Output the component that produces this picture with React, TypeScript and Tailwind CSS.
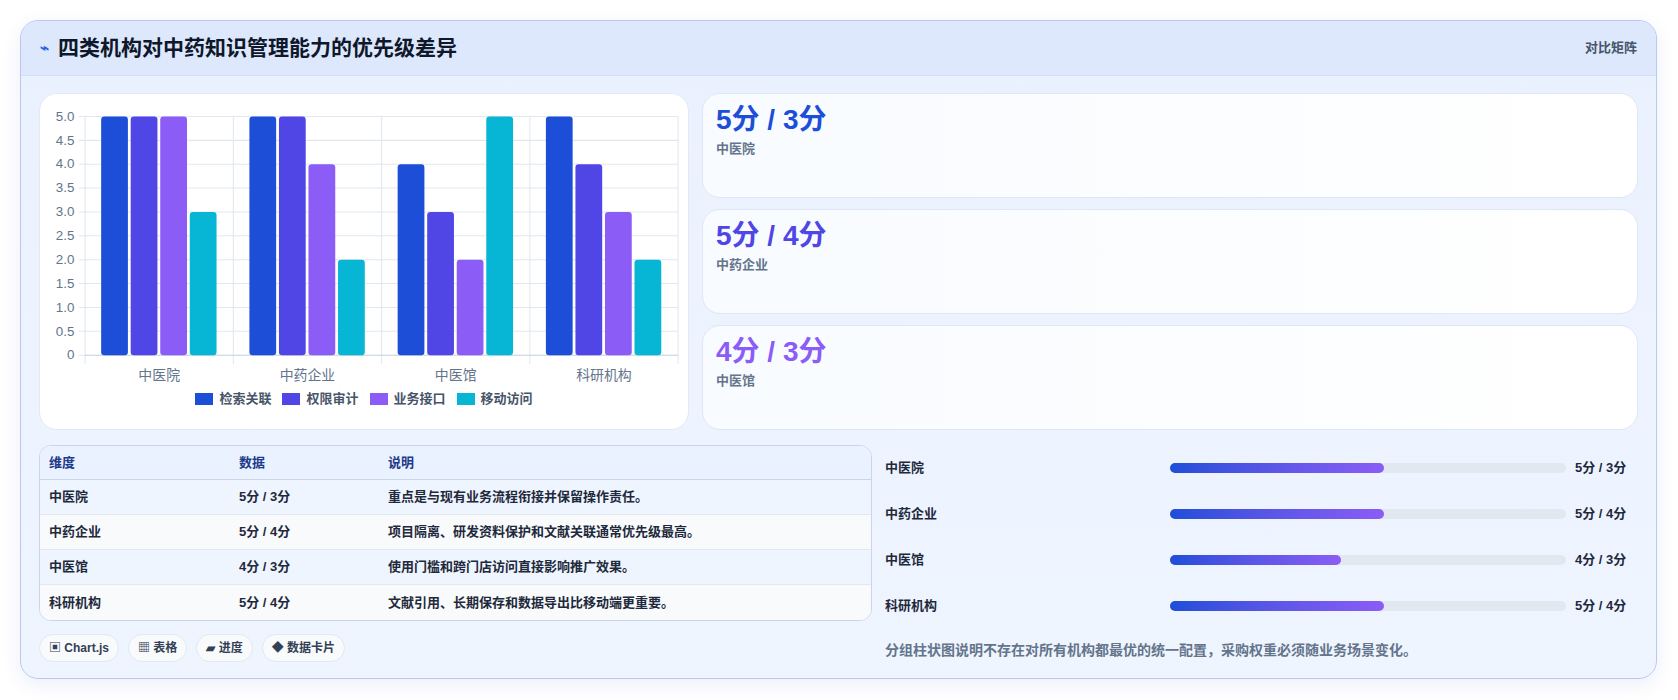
import React from "react";

const cats = ["中医院", "中药企业", "中医馆", "科研机构"];
const data = [
  [5, 5, 5, 3],
  [5, 5, 4, 2],
  [4, 3, 2, 5],
  [5, 4, 3, 2],
];
const colors = ["#1d4ed8", "#4f46e5", "#8b5cf6", "#06b6d4"];
const series = ["检索关联", "权限审计", "业务接口", "移动访问"];

function Chart() {
  const x0 = 42, x1 = 596, y0 = 21, y1 = 244;
  const gw = (x1 - x0) / 4;
  const unit = (y1 - y0) / 5;
  const ticks = [0, 0.5, 1, 1.5, 2, 2.5, 3, 3.5, 4, 4.5, 5];
  return (
    <svg width="650" height="289" viewBox="0 0 607 270" className="block">
      {ticks.map((t) => {
        const y = y1 - t * unit;
        return (
          <g key={t}>
            <line x1={x0 - 6} x2={x1} y1={y} y2={y} stroke="#e2e8f0" />
            <text x={x0 - 10} y={y + 4} textAnchor="end" fontSize="12.5" fill="#64748b">
              {t === 0 ? "0" : t.toFixed(1)}
            </text>
          </g>
        );
      })}
      {[0, 1, 2, 3, 4].map((i) => (
        <line key={i} x1={x0 + i * gw} x2={x0 + i * gw} y1={y0} y2={y1 + 8} stroke="#e2e8f0" />
      ))}
      <line x1={x0} x2={x1} y1={y1} y2={y1} stroke="#cbd5e1" />
      {data.map((g, gi) =>
        g.map((v, si) => {
          const x = x0 + gi * gw + 15 + si * 27.6;
          const h = v * unit;
          return <rect key={gi + "-" + si} x={x} y={y1 - h} width={25} height={h} rx={3} fill={colors[si]} />;
        })
      )}
      {cats.map((c, i) => (
        <text key={c} x={x0 + i * gw + gw / 2} y={267} textAnchor="middle" fontSize="13" fill="#64748b">
          {c}
        </text>
      ))}
    </svg>
  );
}

const stats = [
  { v: "5分 / 3分", l: "中医院", c: "text-[#1d4ed8]" },
  { v: "5分 / 4分", l: "中药企业", c: "text-[#4f46e5]" },
  { v: "4分 / 3分", l: "中医馆", c: "text-[#8b5cf6]" },
];

const rows = [
  ["中医院", "5分 / 3分", "重点是与现有业务流程衔接并保留操作责任。"],
  ["中药企业", "5分 / 4分", "项目隔离、研发资料保护和文献关联通常优先级最高。"],
  ["中医馆", "4分 / 3分", "使用门槛和跨门店访问直接影响推广效果。"],
  ["科研机构", "5分 / 4分", "文献引用、长期保存和数据导出比移动端更重要。"],
];

const bars = [
  ["中医院", 54, "5分 / 3分"],
  ["中药企业", 54, "5分 / 4分"],
  ["中医馆", 43.3, "4分 / 3分"],
  ["科研机构", 54, "5分 / 4分"],
] as const;

export default function App() {
  return (
    <div className="w-[1678px] h-[700px] bg-white pt-[20px] pl-[20px]" style={{ fontFamily: '"Liberation Sans", "Noto Sans CJK SC", sans-serif' }}>
      <div className="w-[1637px] h-[659px] rounded-[18px] border border-[#b9c8f0] overflow-hidden bg-gradient-to-b from-[#eaf1fe] to-[#eff5ff] shadow-[0_6px_20px_rgba(30,64,175,0.08)]">
        <div className="h-[55px] bg-[#dde8fd] border-b border-[#d3def6] flex items-center justify-between px-[19px]">
          <div className="flex items-center gap-[9px]">
            <span className="text-[#2563eb] text-[15px] font-bold">⌁</span>
            <span className="text-[21px] font-bold text-[#0f172a]">四类机构对中药知识管理能力的优先级差异</span>
          </div>
          <span className="text-[13px] text-[#475569] font-bold">对比矩阵</span>
        </div>
        <div className="px-[18px] pt-[17px]">
          <div className="flex gap-[13px]">
            <div className="w-[650px] h-[337px] bg-white rounded-[18px] border border-[#e2e8f5]">
              <Chart />
              <div className="flex justify-center gap-[11px] mt-[6px] text-[13px] text-[#475569] font-bold">
                {series.map((s, i) => (
                  <div key={s} className="flex items-center gap-[6px]">
                    <span className="w-[18px] h-[12px] inline-block" style={{ background: colors[i] }} />
                    {s}
                  </div>
                ))}
              </div>
            </div>
            <div className="flex-1 flex flex-col gap-[11px]">
              {stats.map((s) => (
                <div key={s.l} className="h-[105px] bg-gradient-to-r from-[#f8fbff] to-white rounded-[18px] border border-[#dfe7f5] px-[13px] pt-[9px]">
                  <div className={"text-[28px] font-bold leading-[34px] " + s.c}>{s.v}</div>
                  <div className="text-[13px] text-[#64748b] mt-[2px] font-bold">{s.l}</div>
                </div>
              ))}
            </div>
          </div>
          <div className="flex gap-[13px] mt-[15px]">
            <div className="w-[833px]">
              <div className="rounded-xl border border-[#c9d5ea] overflow-hidden bg-white text-[13px] font-bold">
                <div className="flex h-[34px] items-center bg-[#eaf2ff] border-b border-[#c9d5ea] text-[#1e3a8a]">
                  <div className="w-[199px] pl-[9px]">维度</div>
                  <div className="w-[149px]">数据</div>
                  <div>说明</div>
                </div>
                {rows.map((r, i) => (
                  <div key={r[0]} className={"flex h-[35px] items-center text-[#1e293b] " + (i % 2 === 0 ? "bg-[#eff5ff]" : "bg-[#f8fafc]") + (i < 3 ? " border-b border-[#e2e8f0]" : "")}>
                    <div className="w-[199px] pl-[9px]">{r[0]}</div>
                    <div className="w-[149px]">{r[1]}</div>
                    <div>{r[2]}</div>
                  </div>
                ))}
              </div>
              <div className="flex gap-[9px] mt-[13px] text-[12px] font-bold text-[#334155]">
                {["▣ Chart.js", "▦ 表格", "▰ 进度", "◆ 数据卡片"].map((c) => (
                  <span key={c} className="h-[28px] px-[9px] flex items-center rounded-full bg-[#f8fafc] border border-[#e2e8f0]">{c}</span>
                ))}
              </div>
            </div>
            <div className="flex-1">
              <div className="flex flex-col">
                {bars.map(([l, w, v]) => (
                  <div key={l} className="h-[46px] flex items-center text-[13px] font-bold text-[#1e293b]">
                    <div className="w-[285px]">{l}</div>
                    <div className="w-[396px] h-[10px] rounded-full bg-[#e2e8f0]">
                      <div className="h-full rounded-full bg-gradient-to-r from-[#1d4ed8] to-[#8b5cf6]" style={{ width: w + "%" }} />
                    </div>
                    <div className="ml-[9px]">{v}</div>
                  </div>
                ))}
              </div>
              <div className="mt-[11px] text-[14px] text-[#64748b] font-bold">分组柱状图说明不存在对所有机构都最优的统一配置，采购权重必须随业务场景变化。</div>
            </div>
          </div>
        </div>
      </div>
    </div>
  );
}
